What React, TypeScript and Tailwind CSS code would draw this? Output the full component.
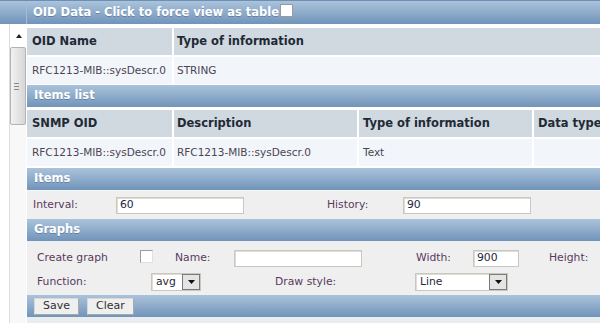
import React from "react";

const bar =
  "h-[22px] flex items-center pl-[7px] bg-gradient-to-b from-[#abc3db] to-[#7194ba] text-white font-bold text-[11.5px] [text-shadow:0_1px_0_rgba(40,60,90,0.35)]";
const th = "h-[27px] flex items-center bg-[#d0d8e0] font-bold text-[11.5px] text-[#1f2a35]";
const td = "h-[27px] flex items-center bg-[#f2f6fa] text-[10.5px] text-[#4b4453]";
const label = "text-[10.8px] text-[#573b5e]";
const input = "h-[17px] bg-white border border-[#c9c8bf] shadow-[inset_1px_1px_0_#dedcd4] text-[10.8px] text-[#1d2540] pl-[3px] flex items-center";

const Select: React.FC<{ value: string; w: string }> = ({ value, w }) => (
  <div className={`${w} h-[18px] flex bg-white border border-[#c9c8bf] shadow-[inset_1px_1px_0_#dedcd4]`}>
    <div className="flex-1 flex items-center pl-[4px] text-[10.8px] text-[#2a2a3a]">{value}</div>
    <div className="w-[18px] h-full flex items-center justify-center bg-[#e4e4e4] border border-[#7a7a7a]">
      <svg width="7" height="4" viewBox="0 0 7 4">
        <path d="M0 0h7L3.5 4z" fill="#111" />
      </svg>
    </div>
  </div>
);

const Button: React.FC<{ children: React.ReactNode; w: string }> = ({ children, w }) => (
  <div className={`${w} h-[17px] flex items-center justify-center bg-[#efefef] border border-[#a8a8a8] border-t-[#d8d8d8] border-l-[#d8d8d8] text-[11px] text-[#2f2f2f]`}>
    {children}
  </div>
);

export default function App() {
  return (
    <div className="w-[600px] h-[323px] overflow-hidden bg-white flex flex-col font-['DejaVu_Sans',Verdana,sans-serif]">
      {/* Top header */}
      <div className="h-[24px] flex border-t border-[#6c8fb6] bg-gradient-to-b from-[#abc3db] to-[#7194ba]">
        <div className="w-[27px] border-r border-[#a5bcd4]" />
        <div className="flex items-center pl-[6px] gap-[1px] text-white font-bold text-[11.5px] [text-shadow:0_1px_0_rgba(40,60,90,0.35)]">
          OID Data - Click to force view as table
          <span className="w-[13px] h-[13px] bg-white border border-[#9a9a9a] -mt-[4px]" />
        </div>
      </div>

      <div className="flex flex-1">
        {/* Left scrollbar */}
        <div className="w-[27px] flex bg-white">
          <div className="ml-[9px] w-[17px] border-l border-[#dddddd] bg-[#f8f8f8] flex flex-col items-center">
            <div className="h-[23px] w-full bg-white flex items-center justify-center pl-[2px]">
              <svg width="6" height="4" viewBox="0 0 6 4">
                <path d="M3 0L6 4H0z" fill="#222" />
              </svg>
            </div>
            <div className="w-[16px] h-[78px] rounded-[2px] border border-[#b3b3b3] bg-gradient-to-r from-[#f2f2f2] to-[#d6d6d6] flex items-center pl-[3px]">
              <div className="flex flex-col gap-[2px]">
                <div className="w-[5px] h-px bg-[#8a8a8a]" />
                <div className="w-[5px] h-px bg-[#8a8a8a]" />
                <div className="w-[5px] h-px bg-[#8a8a8a]" />
              </div>
            </div>
          </div>
        </div>

        {/* Main content */}
        <div className="flex-1 flex flex-col pt-[4px] pl-[1px]">
          {/* OID table */}
          <div className="grid grid-cols-[145px_1fr] gap-x-[2px] gap-y-[2px]">
            <div className={`${th} pl-[5px] h-[26px]`}>OID Name</div>
            <div className={`${th} pl-[3px] h-[26px]`}>Type of information</div>
            <div className={`${td} pl-[5px] bg-[#b5d7e5]`}>RFC1213-MIB::sysDescr.0</div>
            <div className={`${td} pl-[3px] text-[#3b3347]`}>STRING</div>
          </div>

          <div className={`${bar} mt-px`}>Items list</div>

          <div className="grid grid-cols-[145px_183px_173px_1fr] gap-[2px] mt-[3px]">
            <div className={`${th} pl-[5px]`}>SNMP OID</div>
            <div className={`${th} pl-[3px]`}>Description</div>
            <div className={`${th} pl-[4px]`}>Type of information</div>
            <div className={`${th} pl-[4px] whitespace-nowrap`}>Data type</div>
            <div className={`${td} pl-[5px]`}>RFC1213-MIB::sysDescr.0</div>
            <div className={`${td} pl-[3px]`}>RFC1213-MIB::sysDescr.0</div>
            <div className={`${td} pl-[4px]`}>Text</div>
            <div className={td} />
          </div>

          <div className={`${bar} mt-[2px]`}>Items</div>
          <div className="h-[29px] bg-[#efefef] border-t border-[#f8f8f8] flex items-center pl-[6px]">
            <div className={`${label} w-[83px]`}>Interval:</div>
            <div className={`${input} w-[128px]`}>60</div>
            <div className={`${label} ml-[83px] w-[76px]`}>History:</div>
            <div className={`${input} w-[128px]`}>90</div>
          </div>

          <div className={bar}>Graphs</div>
          <div className="bg-[#efefef] flex flex-col pt-[5px] h-[54px]">
            <div className="h-[24px] flex items-center pl-[10px]">
              <div className={`${label} w-[103px]`}>Create graph</div>
              <div className="w-[35px] -mt-[4px]">
                <div className="w-[13px] h-[13px] bg-white border border-[#9c9c9c] border-r-[#e0e0e0] border-b-[#e0e0e0]" />
              </div>
              <div className={`${label} w-[59px]`}>Name:</div>
              <div className={`${input} w-[128px]`} />
              <div className={`${label} ml-[54px] w-[57px]`}>Width:</div>
              <div className={`${input} w-[46px]`}>900</div>
              <div className={`${label} ml-[30px]`}>Height:</div>
            </div>
            <div className="h-[24px] flex items-center pl-[10px]">
              <div className={`${label} w-[114px]`}>Function:</div>
              <Select value="avg" w="w-[50px]" />
              <div className={`${label} ml-[74px] w-[140px]`}>Draw style:</div>
              <Select value="Line" w="w-[93px]" />
            </div>
          </div>

          <div className="h-[22px] flex items-center gap-[8px] pl-[7px] bg-gradient-to-b from-[#abc3db] to-[#7194ba]">
            <Button w="w-[45px]">Save</Button>
            <Button w="w-[47px]">Clear</Button>
          </div>
          <div className="flex-1 bg-[#eaedf0]" />
        </div>
      </div>
    </div>
  );
}
